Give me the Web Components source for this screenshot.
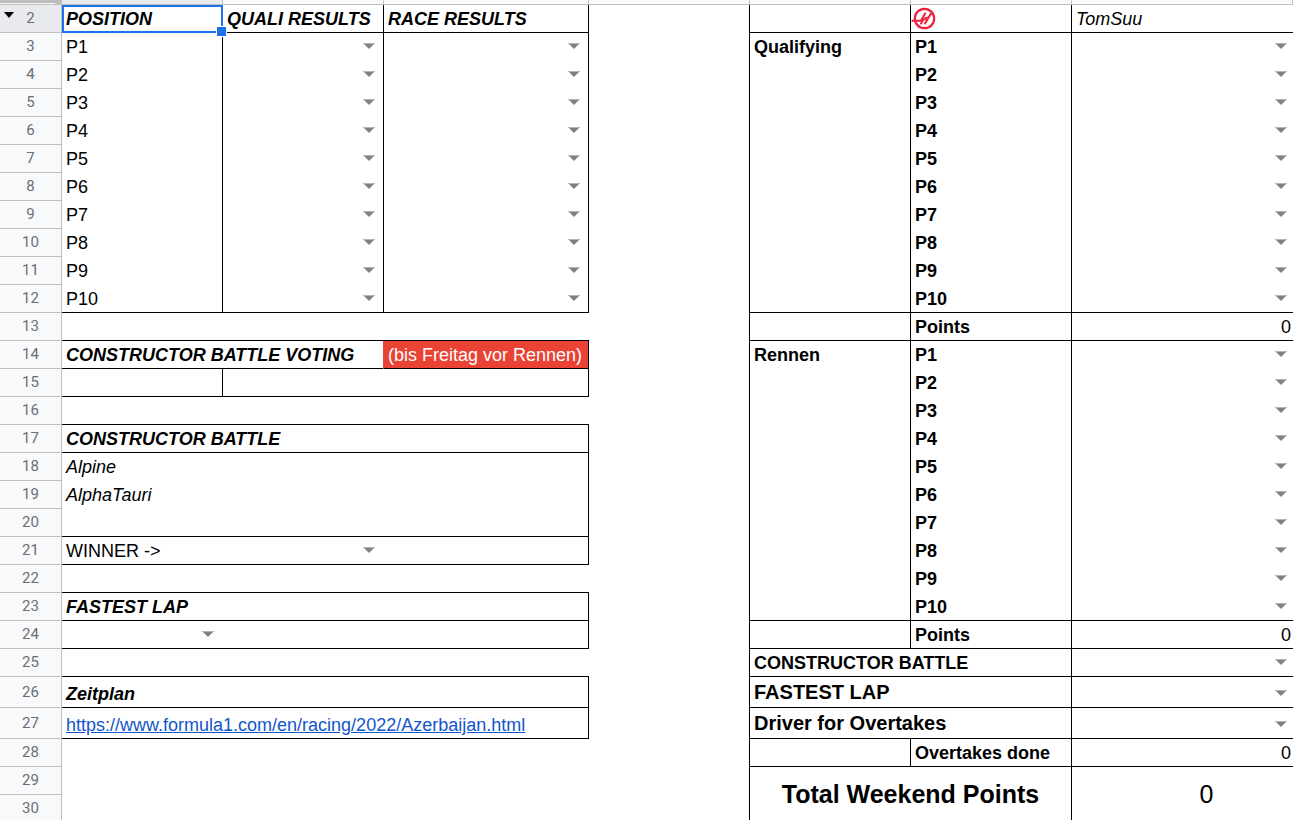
<!DOCTYPE html>
<html lang="de">
<head>
<meta charset="utf-8">
<title>F1 Tippspiel</title>
<style>
  html, body { margin: 0; height: 100%; overflow: hidden; background: #fff; }
</style>
</head>
<body>
<race-sheet></race-sheet>

<script>
class HaasLogo extends HTMLElement {
  constructor() {
    super();
    this.attachShadow({ mode: 'open' }).innerHTML = `
      <style>
        :host { display: block; width: 26px; height: 27px; }
        svg { display: block; }
      </style>
      <svg width="26" height="27" viewBox="0 0 26 27" role="img" aria-label="Haas" fill="none" stroke="#ee2240">
        <circle cx="13.5" cy="13.5" r="9.7" stroke-width="2.2"/>
        <path d="M0.5 15.8H9.8L14.6 7.8" stroke-width="2"/>
        <path d="M9.6 19.4L12.4 14.2H16.6L13.6 19.2M17 13.4L20.4 8" stroke-width="2"/>
        <path d="M13.6 12.6H17.6" stroke-width="1.4"/>
      </svg>`;
  }
}
customElements.define('haas-logo', HaasLogo);

class SheetPicker extends HTMLElement {
  constructor() {
    super();
    this.attachShadow({ mode: 'open' }).innerHTML = `
      <style>
        :host { display: flex; align-items: center; height: 27px; padding-right: var(--picker-end, 8px); }
        select {
          appearance: none; flex: 1; min-width: 0; height: 24px; margin: 0; padding: 0 16px 0 4px;
          border: 0; outline: 0; background: transparent; font: inherit; color: inherit;
        }
        svg { flex: none; width: 12px; height: 6px; margin: 0 0 2px -12px; pointer-events: none; }
      </style>
      <select><option></option></select>
      <svg viewBox="0 0 12 6"><path d="M0 0H12L6 6Z" fill="#808080"/><path d="M0 0H12V1H0Z" fill="#b5b5b5"/></svg>`;
    this.shadowRoot.querySelector('select').setAttribute('aria-label', this.getAttribute('label') || 'Auswahl');
  }
}
customElements.define('sheet-picker', SheetPicker);

class CellSelection extends HTMLElement {
  constructor() {
    super();
    this.attachShadow({ mode: 'open' }).innerHTML = `
      <style>
        :host { position: absolute; inset: 0 -1px -1px 0; border: 2px solid #1a73e8; pointer-events: none; z-index: 1; }
        i { position: absolute; right: -6px; bottom: -6px; width: 9px; height: 9px; background: #1a73e8; border: 1px solid #fff; }
      </style><i></i>`;
  }
}
customElements.define('cell-selection', CellSelection);

/* Border letters: r = right edge, b = bottom edge. */
const cell = (html = '', cls = '', attrs = '') => `<td class="${cls}" ${attrs}>${html}</td>`;
const pick = label => `<sheet-picker label="${label}"></sheet-picker>`;

function leftCells(n) {
  if (n === 2) return cell('POSITION<cell-selection></cell-selection>', 'r b h sel') + cell('QUALI RESULTS', 'r b h') + cell('RACE RESULTS', 'r b h');
  if (n <= 12) {
    const b = n === 12 ? ' b' : '', p = 'P' + (n - 2);
    return cell(p, 'r' + b) + cell(pick('Quali ' + p), 'r p' + b) + cell(pick('Race ' + p), 'r p' + b);
  }
  const wide = 'colspan="3"';
  switch (n) {
    case 13: case 16: case 22: case 25: return cell('', 'b', wide);
    case 14: return cell('CONSTRUCTOR BATTLE VOTING', 'b h', 'colspan="2"') + cell('(bis Freitag vor Rennen)', 'r b red');
    case 15: return cell('', 'r b') + cell('', 'r b', 'colspan="2"');
    case 17: return cell('CONSTRUCTOR BATTLE', 'r b h', wide);
    case 18: return cell('Alpine', 'r it', wide);
    case 19: return cell('AlphaTauri', 'r it', wide);
    case 20: return cell('', 'r b', wide);
    case 21: return cell('WINNER -&gt;', 'b') + cell(pick('Winner'), 'b p g') + cell('', 'r b');
    case 23: return cell('FASTEST LAP', 'r b h', wide);
    case 24: return cell(pick('Fastest lap'), 'b p g') + cell('', 'r b', 'colspan="2"');
    case 26: return cell('Zeitplan', 'r b h', wide);
    case 27: return cell('<a href="https://www.formula1.com/en/racing/2022/Azerbaijan.html">https://www.formula1.com/en/racing/2022/Azerbaijan.html</a>', 'r b', wide);
  }
  return cell('', '', wide);
}

function rightCells(n) {
  const two = 'colspan="2"';
  if (n === 2) return cell('', 'r b') + cell('<haas-logo></haas-logo>', 'r b p') + cell('TomSuu', 'b it');
  if (n === 13 || n === 24) return cell('', 'r b') + cell('Points', 'r b bold') + cell('0', 'b num');
  if (n < 24) {
    const p = 'P' + (n < 13 ? n - 2 : n - 13), b = p === 'P10' ? ' b' : '';
    const name = n === 3 ? 'Qualifying' : n === 14 ? 'Rennen' : '';
    return cell(name, 'r bold' + b) + cell(p, 'r bold' + b) + cell(pick((n < 13 ? 'Qualifying ' : 'Rennen ') + p), 'p' + b);
  }
  switch (n) {
    case 25: return cell('CONSTRUCTOR BATTLE', 'r b bold', two) + cell(pick('Constructor battle'), 'b p');
    case 26: return cell('FASTEST LAP', 'r b bold big', two) + cell(pick('Fastest lap'), 'b p');
    case 27: return cell('Driver for Overtakes', 'r b bold big', two) + cell(pick('Driver for Overtakes'), 'b p');
    case 28: return cell('', 'r b') + cell('Overtakes done', 'r b bold') + cell('0', 'b num');
    case 29: return cell('Total Weekend Points', 'r bold total', two + ' rowspan="2"') + cell('0', 'total sum', 'rowspan="2"');
  }
  return '';
}

class RaceSheet extends HTMLElement {
  constructor() {
    super();
    let rows = '';
    for (let n = 2; n <= 30; n++) {
      const cls = n === 2 ? 'active' : n === 26 || n === 27 ? 'tall' : '';
      const mark = n === 2 ? '<svg class="mark" viewBox="0 0 10 6"><path d="M0 0H10L5 6Z"/></svg>' : '';
      rows += `<tr class="${cls}"><th scope="row">${mark}${n}</th>${leftCells(n)}${cell('', 'r')}${rightCells(n)}</tr>`;
    }
    this.attachShadow({ mode: 'open' }).innerHTML = `
      <style>
        :host { display: block; height: 100vh; overflow: hidden; font: 18px/25px "Liberation Sans", Arial, sans-serif; color: #000; }
        table { width: 100%; min-width: 1200px; table-layout: fixed; border-collapse: separate; border-spacing: 0; }
        .n { width: 62px; } .m { width: 161px; } .w { width: 205px; }
        thead td { height: 5px; padding: 0; background: #f8f9fa; border-right: 1px solid #c0c0c0; border-bottom: 1px solid #c0c0c0; }
        thead td.corner { background: #bdbdbd linear-gradient(#f8f9fa, #f8f9fa) 0 100% / 55px 1px no-repeat; }
        thead td.on { background: #e8eaed; }
        th, td { box-sizing: border-box; }
        tbody tr { height: 28px; }
        tbody tr.tall { height: 31px; }
        th { position: relative; padding: 0; font: 15px/27px Roboto, sans-serif; color: #6b6f75; background: #f8f9fa;
             border-right: 1px solid #c0c0c0; border-bottom: 1px solid #c0c0c0; vertical-align: middle; }
        .active th { background: #e8eaed; }
        .mark { position: absolute; left: 4px; top: 7px; width: 10px; height: 6px; fill: #000; }
        tbody td { padding: 0 4px 1px; vertical-align: bottom; white-space: nowrap; border: 0 solid #000; }
        tbody td.r { border-right-width: 1px; }
        tbody td.b { border-bottom-width: 1px; padding-bottom: 0; }
        tbody td.p { padding-left: 0; padding-right: 0; }
        tbody td.g { --picker-end: 9px; }
        tbody td.p:last-child { --picker-end: 6px; }
        td.h { font-weight: bold; font-style: italic; }
        td.it { font-style: italic; }
        td.bold { font-weight: bold; }
        td.big { font-size: 20px; vertical-align: middle; }
        td.sel { position: relative; }
        td.red { background: #ea4335; color: #fff; box-shadow: -1px 0 #ea4335; }
        tbody td.num { text-align: right; padding-right: 2px; }
        tbody td.total { font-size: 25px; text-align: center; vertical-align: middle; }
        tbody td.sum { padding-left: 52px; }
        a { color: #1155cc; }
      </style>
      <table>
        <colgroup><col class="n"><col class="m"><col class="m"><col class="w"><col class="m"><col class="m"><col class="m"><col></colgroup>
        <thead><tr><td class="corner"></td><td class="on"></td><td></td><td></td><td></td><td></td><td></td><td></td></tr></thead>
        <tbody>${rows}</tbody>
      </table>`;
  }
}
customElements.define('race-sheet', RaceSheet);
</script>
</body>
</html>
